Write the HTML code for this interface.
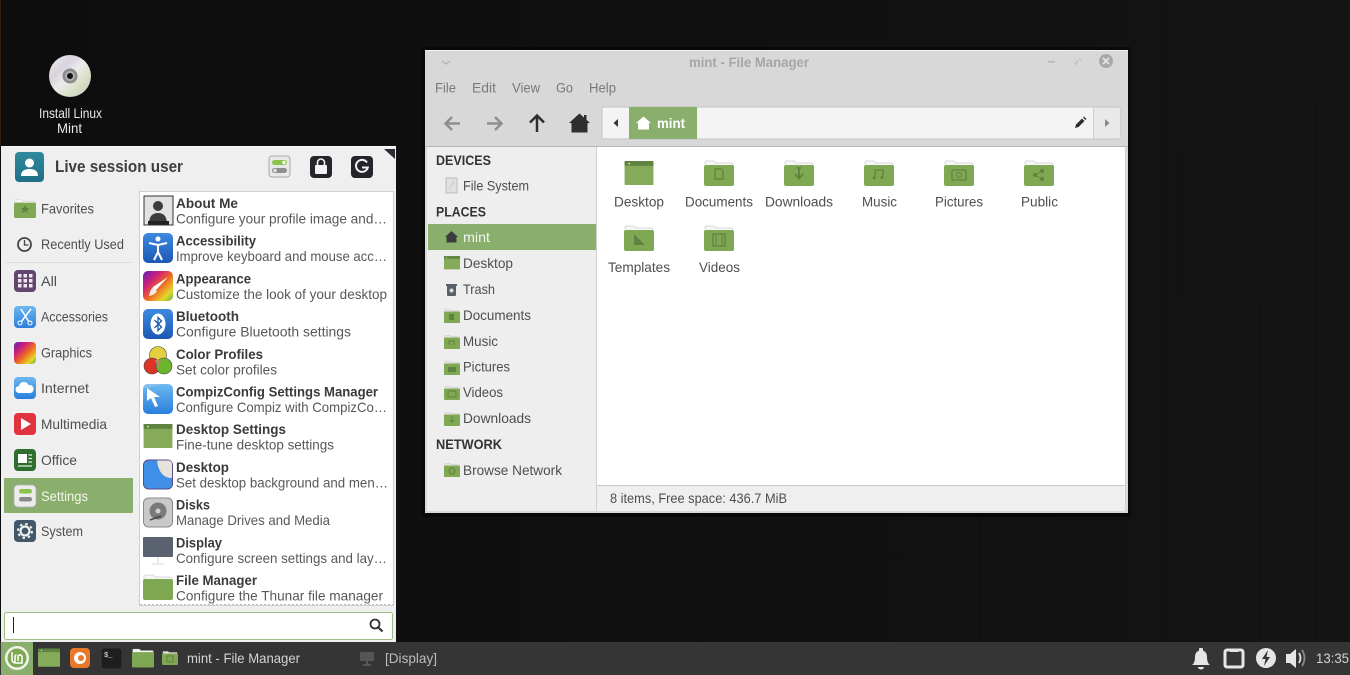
<!DOCTYPE html>
<html lang="en"><head><meta charset="utf-8"><title>Linux Mint desktop</title>
<style>
html,body{margin:0;padding:0;background:#111;width:1350px;height:675px;overflow:hidden}
svg{display:block}
text{font-family:"Liberation Sans",sans-serif;font-size:14px;fill:#484848}
.b{font-weight:700;fill:#3a3a3a}
.d{fill:#585858}
.h{font-weight:700;fill:#333}
.f{fill:#4e4e4e}
.m{fill:#7a7a7a}
.w{fill:#fff}
.p{fill:#d4d4d4}
</style></head><body>
<svg xmlns="http://www.w3.org/2000/svg" width="1350" height="675" viewBox="0 0 1350 675">
<defs>
<linearGradient id="bg" x1="0" y1="0" x2="1" y2="0"><stop offset="0" stop-color="#0d0d0d"/><stop offset=".5" stop-color="#101010"/><stop offset="1" stop-color="#141414"/></linearGradient>
<linearGradient id="rb" x1="0" y1="0" x2="1" y2="1"><stop offset="0" stop-color="#5b22b5"/><stop offset=".3" stop-color="#d0207a"/><stop offset=".55" stop-color="#ee6a22"/><stop offset=".8" stop-color="#e8d62a"/><stop offset="1" stop-color="#58b848"/></linearGradient>
<linearGradient id="blue" x1="0" y1="0" x2="0" y2="1"><stop offset="0" stop-color="#3d8ae0"/><stop offset="1" stop-color="#1c58b4"/></linearGradient>
<linearGradient id="sky" x1="0" y1="0" x2="0" y2="1"><stop offset="0" stop-color="#6cb8f0"/><stop offset="1" stop-color="#2a7fdc"/></linearGradient>
<linearGradient id="teal" x1="0" y1="0" x2="0" y2="1"><stop offset="0" stop-color="#2f8a9c"/><stop offset="1" stop-color="#1f6f86"/></linearGradient>
<linearGradient id="cd" x1="0" y1="0" x2="1" y2="1"><stop offset="0" stop-color="#f4f4f4"/><stop offset=".3" stop-color="#d8d2dc"/><stop offset=".5" stop-color="#ebebeb"/><stop offset=".72" stop-color="#d8e0c4"/><stop offset="1" stop-color="#c4c4c4"/></linearGradient>
<symbol id="fold" viewBox="0 0 30 26"><path d="M1 5V2.500Q1 1 2.500 1H10L12 3H27.500Q29 3 29 5V8H1Z" fill="#f6f6f6" stroke="#d0d0d0" stroke-width=".8"/><rect x="0" y="5" width="30" height="21" rx="2" fill="#7fa853"/></symbol>
<symbol id="win" viewBox="0 0 30 26"><rect x="0" y="0" width="30" height="25" rx="1" fill="#85ab5a"/><rect x="0" y="0" width="30" height="5" fill="#5f8340"/><rect x="4" y="2" width="1.500" height="1.500" fill="#e8f0dc"/></symbol>
<symbol id="sfold" viewBox="0 0 16 16"><path d="M1 4V1.500H6L7 2.500H15V5H1Z" fill="#e8e8e8" stroke="#c0c0c0" stroke-width=".5"/><rect x="0" y="3.500" width="16" height="11.500" rx="1" fill="#7fa853"/></symbol>
</defs>

<!-- desktop -->
<rect width="1350" height="675" fill="url(#bg)"/>
<rect x="0" y="0" width="1" height="145" fill="#3a1a14"/>
<g stroke="#0a0a0a" stroke-width="1" opacity=".3">
<path d="M1165 0V640M1296 0V200M832 513V640M980 513V640M1034 510V640M1316 100V640M700 513V642M560 513V642M1180 150V300M1260 300V640"/>
<path d="M800 555H930M800 608H885"/>
</g>
<circle cx="70" cy="76" r="21" fill="url(#cd)"/>
<circle cx="70" cy="76" r="7.500" fill="#8a8a8a"/><circle cx="70" cy="76" r="5" fill="#b0b0b0"/><circle cx="70" cy="76" r="3" fill="#111"/>
<text class="p" x="39" y="118" textLength="63" lengthAdjust="spacingAndGlyphs" style="fill:#e8e8e8">Install Linux</text>
<text class="p" x="57" y="133" textLength="25" lengthAdjust="spacingAndGlyphs" style="fill:#e8e8e8">Mint</text>

<!-- file manager window -->
<rect x="422" y="47" width="709" height="470" fill="#000" opacity=".45"/>
<rect x="425" y="50" width="703" height="463" fill="#d8d8d8"/>
<rect x="425" y="50" width="703" height="1" fill="#f2f2f2"/>
<path d="M442 61l4 3 4-3" fill="none" stroke="#b4b4b4" stroke-width="1.300"/>
<text x="689" y="67" textLength="120" lengthAdjust="spacingAndGlyphs" style="font-weight:700;fill:#a6a6a6">mint - File Manager</text>
<rect x="1048" y="61" width="7" height="1.500" fill="#b8b8b8"/>
<path d="M1075 64l3 -3M1079 59.500l2 0M1075 65l1 0" stroke="#bcbcbc" stroke-width="1.500" fill="none"/>
<circle cx="1106" cy="61" r="7" fill="#a9a9a9"/><path d="M1103 58l6 6M1109 58l-6 6" stroke="#e6e6e6" stroke-width="1.800"/>
<text class="m" x="435" y="92.500" textLength="21" lengthAdjust="spacingAndGlyphs">File</text>
<text class="m" x="472" y="92.500" textLength="24" lengthAdjust="spacingAndGlyphs">Edit</text>
<text class="m" x="512" y="92.500" textLength="28" lengthAdjust="spacingAndGlyphs">View</text>
<text class="m" x="556" y="92.500" textLength="17" lengthAdjust="spacingAndGlyphs">Go</text>
<text class="m" x="589" y="92.500" textLength="27" lengthAdjust="spacingAndGlyphs">Help</text>
<!-- toolbar icons -->
<path d="M460 123.500H446M452 117l-6.500 6.500 6.500 6.500" fill="none" stroke="#8e8e8e" stroke-width="2.500"/>
<path d="M487 123.500H501M495 117l6.500 6.500-6.500 6.500" fill="none" stroke="#8e8e8e" stroke-width="2.500"/>
<path d="M537 132V116M530 122.500l7-7 7 7" fill="none" stroke="#2e2e2e" stroke-width="2.500"/>
<path d="M569 123l10.500-9.500 10.500 9.500h-2.500v9.500h-16V123Z" fill="#2e2e2e"/><rect x="584" y="115" width="2.500" height="5" fill="#2e2e2e"/>
<!-- path bar -->
<rect x="602" y="107" width="518" height="32" rx="2" fill="#f4f4f4" stroke="#c4c4c4"/>
<rect x="1094" y="107.500" width="26" height="31" fill="#e9e9e9"/><rect x="1093" y="107" width="1" height="32" fill="#cfcfcf"/>
<path d="M618 119v8l-4.500-4Z" fill="#333"/>
<path d="M1105 119v8l4.500-4Z" fill="#8a8a8a"/>
<rect x="629" y="107" width="68" height="32" fill="#8aae6b"/>
<path d="M636 123l7.500-6.500 7.500 6.500h-2v6.500h-11V123Z" fill="#fff"/>
<text class="w" x="657" y="128" textLength="28" lengthAdjust="spacingAndGlyphs" style="font-weight:700">mint</text>
<path d="M1075 128l1-3.500 6-6 2.500 2.500-6 6ZM1083 117.500l1-1 2.500 2.500-1 1Z" fill="#2e2e2e"/>
<rect x="425" y="146" width="703" height="1" fill="#b8b8b8"/>
<!-- sidebar -->
<rect x="427" y="147" width="169" height="364" fill="#eeeeee"/>
<rect x="596" y="147" width="1" height="364" fill="#d0d0d0"/>
<text class="h" x="436" y="165" textLength="55" lengthAdjust="spacingAndGlyphs">DEVICES</text>
<rect x="446" y="178" width="11" height="15" fill="#e0e0e0" stroke="#bdbdbd"/><path d="M449 189l5-7" stroke="#c6c6c6"/>
<text class="f" x="463" y="190.500" textLength="66" lengthAdjust="spacingAndGlyphs">File System</text>
<text class="h" x="436" y="216.500" textLength="50" lengthAdjust="spacingAndGlyphs">PLACES</text>
<rect x="428" y="224" width="168" height="26" fill="#8aae6b"/>
<path d="M445 237l6.500-6 6.500 6h-1.500v5.500h-10V237Z" fill="#3d3d3d"/>
<text x="463" y="242" textLength="27" lengthAdjust="spacingAndGlyphs" style="fill:#f2f6ec">mint</text>
<use href="#win" x="444" y="256" width="16" height="14"/>
<text class="f" x="463" y="268" textLength="50" lengthAdjust="spacingAndGlyphs">Desktop</text>
<path d="M446 284h11v2h-1v9q0 1-1 1h-7q-1 0-1-1v-9h-1Z" fill="#5a6068"/><circle cx="451.500" cy="290.500" r="2" fill="#e0e0e0"/>
<text class="f" x="463" y="294" textLength="32" lengthAdjust="spacingAndGlyphs">Trash</text>
<use href="#sfold" x="444" y="308" width="16" height="16"/><rect x="449" y="314" width="5" height="6" fill="#5f8340"/>
<text class="f" x="463" y="320" textLength="68" lengthAdjust="spacingAndGlyphs">Documents</text>
<use href="#sfold" x="444" y="334" width="16" height="16"/><path d="M449 345v-4h5v4" fill="none" stroke="#5f8340"/>
<text class="f" x="463" y="346" textLength="35" lengthAdjust="spacingAndGlyphs">Music</text>
<use href="#sfold" x="444" y="360" width="16" height="16"/><rect x="448" y="367" width="8" height="5" fill="#5f8340"/>
<text class="f" x="463" y="371.500" textLength="47" lengthAdjust="spacingAndGlyphs">Pictures</text>
<use href="#sfold" x="444" y="385" width="16" height="16"/><rect x="448" y="391" width="8" height="6" fill="none" stroke="#5f8340"/>
<text class="f" x="463" y="397" textLength="40" lengthAdjust="spacingAndGlyphs">Videos</text>
<use href="#sfold" x="444" y="411" width="16" height="16"/><path d="M452 416v6M450 420l2 2 2-2" fill="none" stroke="#5f8340"/>
<text class="f" x="463" y="423" textLength="68" lengthAdjust="spacingAndGlyphs">Downloads</text>
<text class="h" x="436" y="449" textLength="66" lengthAdjust="spacingAndGlyphs">NETWORK</text>
<use href="#sfold" x="444" y="462" width="16" height="16"/><circle cx="452" cy="471" r="3" fill="none" stroke="#5f8340"/>
<text class="f" x="463" y="475" textLength="99" lengthAdjust="spacingAndGlyphs">Browse Network</text>
<!-- main view -->
<rect x="597" y="147" width="528" height="339" fill="#fff"/>
<rect x="597" y="485" width="528" height="1" fill="#c8c8c8"/>
<rect x="597" y="486" width="528" height="25" fill="#efefef"/>
<rect x="1125" y="147" width="1" height="364" fill="#cfcfcf"/>
<text class="f" x="610" y="503" textLength="177" lengthAdjust="spacingAndGlyphs">8 items, Free space: 436.7 MiB</text>

<use href="#win" x="624" y="161" width="30" height="25"/>
<use href="#fold" x="704" y="160" width="30" height="26"/><path d="M715 169h6l2 2v8h-8Z" fill="none" stroke="#5f8340" stroke-width="1.300"/>
<use href="#fold" x="784" y="160" width="30" height="26"/><path d="M799 168v10M795 174l4 4.500 4-4.500M797 168h4" fill="none" stroke="#5f8340" stroke-width="1.800"/>
<use href="#fold" x="864" y="160" width="30" height="26"/><path d="M875 178v-8h8v7" fill="none" stroke="#5f8340" stroke-width="1.300"/><circle cx="874" cy="178" r="1.500" fill="#5f8340"/><circle cx="882" cy="177.500" r="1.500" fill="#5f8340"/>
<use href="#fold" x="944" y="160" width="30" height="26"/><rect x="952" y="170" width="14" height="10" rx="1" fill="none" stroke="#5f8340" stroke-width="1.300"/><circle cx="959" cy="175" r="2.500" fill="none" stroke="#5f8340"/>
<use href="#fold" x="1024" y="160" width="30" height="26"/><path d="M1035 175l5-3M1035 175l5 3" stroke="#5f8340"/><circle cx="1035" cy="175" r="2" fill="#5f8340"/><circle cx="1042" cy="171" r="2" fill="#5f8340"/><circle cx="1042" cy="179" r="2" fill="#5f8340"/>
<text class="f" x="614" y="206.500" textLength="50" lengthAdjust="spacingAndGlyphs">Desktop</text>
<text class="f" x="685" y="206.500" textLength="68" lengthAdjust="spacingAndGlyphs">Documents</text>
<text class="f" x="765" y="206.500" textLength="68" lengthAdjust="spacingAndGlyphs">Downloads</text>
<text class="f" x="862" y="206.500" textLength="35" lengthAdjust="spacingAndGlyphs">Music</text>
<text class="f" x="935" y="206.500" textLength="48" lengthAdjust="spacingAndGlyphs">Pictures</text>
<text class="f" x="1021" y="206.500" textLength="37" lengthAdjust="spacingAndGlyphs">Public</text>
<use href="#fold" x="624" y="225" width="30" height="26"/><path d="M634 234v11h11Z" fill="#5f8340"/>
<use href="#fold" x="704" y="225" width="30" height="26"/><rect x="713" y="234" width="12" height="12" fill="none" stroke="#5f8340" stroke-width="1.300"/><path d="M716 234v12M722 234v12" stroke="#5f8340"/>
<text class="f" x="608" y="272" textLength="62" lengthAdjust="spacingAndGlyphs">Templates</text>
<text class="f" x="699" y="272" textLength="41" lengthAdjust="spacingAndGlyphs">Videos</text>

<!-- menu -->
<rect x="1" y="146" width="395" height="496" fill="#efefef"/>
<rect x="1" y="146" width="395" height="1" fill="#f8f8f8"/>
<path d="M384 149h11v10Z" fill="#2a2a35"/>
<rect x="15" y="152" width="29" height="30" rx="4" fill="url(#teal)"/>
<circle cx="29.500" cy="163" r="4.500" fill="#fff"/><path d="M21 176q0-7 8.500-7t8.500 7Z" fill="#fff"/>
<text x="55" y="172" textLength="128" lengthAdjust="spacingAndGlyphs" style="font-size:16.500px;font-weight:700;fill:#3d3d3d">Live session user</text>
<rect x="269" y="156" width="21" height="21" rx="3" fill="#e8e8e8" stroke="#a8a8a8"/>
<rect x="272" y="160" width="15" height="5" rx="2.500" fill="#8bc34a"/><rect x="272" y="168" width="15" height="5" rx="2.500" fill="#8e8e8e"/><circle cx="284" cy="162.500" r="1.800" fill="#fff"/><circle cx="275" cy="170.500" r="1.800" fill="#e0e0e0"/>
<rect x="310" y="156" width="22" height="22" rx="4" fill="#26232b"/><rect x="315" y="165" width="12" height="9" rx="1" fill="#f2f2f2"/><path d="M317.500 165v-2.500a3.500 3.500 0 0 1 7 0V165" fill="none" stroke="#f2f2f2" stroke-width="1.600"/>
<rect x="351" y="156" width="22" height="22" rx="4" fill="#26232b"/><path d="M367 162.500a6 6 0 1 0 .8 5H362" fill="none" stroke="#f2f2f2" stroke-width="2"/>

<!-- categories -->
<use href="#fold" x="14" y="199" width="22" height="19"/><path d="M25 205l1.500 3h3l-2.500 2 1 3-3-1.800-3 1.800 1-3-2.500-2h3Z" fill="#5f8340"/>
<text class="f" x="41" y="213.500" textLength="53" lengthAdjust="spacingAndGlyphs">Favorites</text>
<circle cx="24.500" cy="244.500" r="6.500" fill="none" stroke="#444" stroke-width="1.800"/><path d="M24.500 240v5h4" fill="none" stroke="#444" stroke-width="1.300"/>
<text class="f" x="41" y="249" textLength="83" lengthAdjust="spacingAndGlyphs">Recently Used</text>
<rect x="5" y="262" width="128" height="1" fill="#dedede"/>
<rect x="14" y="270" width="22" height="22" rx="4" fill="#63466f"/>
<g fill="#efe8f2"><rect x="18" y="274" width="3.500" height="3.500"/><rect x="23.500" y="274" width="3.500" height="3.500"/><rect x="29" y="274" width="3.500" height="3.500"/><rect x="18" y="279" width="3.500" height="3.500"/><rect x="23.500" y="279" width="3.500" height="3.500"/><rect x="29" y="279" width="3.500" height="3.500"/><rect x="18" y="284" width="3.500" height="3.500"/><rect x="23.500" y="284" width="3.500" height="3.500"/><rect x="29" y="284" width="3.500" height="3.500"/></g>
<text class="f" x="41" y="286" textLength="16" lengthAdjust="spacingAndGlyphs">All</text>
<rect x="14" y="306" width="22" height="22" rx="4" fill="url(#sky)"/><path d="M21 309l8 13M31 309l-10 13" stroke="#fff" stroke-width="1.500"/><circle cx="20" cy="323" r="2" fill="none" stroke="#fff"/><circle cx="30" cy="323" r="2" fill="none" stroke="#fff"/>
<text class="f" x="41" y="321.500" textLength="67" lengthAdjust="spacingAndGlyphs">Accessories</text>
<rect x="14" y="342" width="22" height="22" rx="4" fill="url(#rb)"/>
<text class="f" x="41" y="357.500" textLength="51" lengthAdjust="spacingAndGlyphs">Graphics</text>
<rect x="14" y="377" width="22" height="22" rx="4" fill="url(#sky)"/><path d="M19 393a3.500 3.500 0 0 1 0-7 5 5 0 0 1 9.500-1 4 4 0 0 1 2 8Z" fill="#fff"/>
<text class="f" x="41" y="393" textLength="48" lengthAdjust="spacingAndGlyphs">Internet</text>
<rect x="14" y="413" width="22" height="22" rx="4" fill="#e0333f"/><path d="M21 418v12l10-6Z" fill="#fff"/>
<text class="f" x="41" y="429" textLength="66" lengthAdjust="spacingAndGlyphs">Multimedia</text>
<rect x="14" y="449" width="22" height="22" rx="4" fill="#2f6e2e"/><rect x="18" y="454" width="9" height="9" fill="#fff"/><path d="M28.500 455h3.500M28.500 458.500h3.500M28.500 462h3.500M18 466h14" stroke="#dfeede" stroke-width="1.200"/>
<text class="f" x="41" y="465" textLength="36" lengthAdjust="spacingAndGlyphs">Office</text>
<rect x="4" y="478" width="129" height="35" rx="1" fill="#8aae6b"/>
<rect x="14" y="485" width="22" height="22" rx="4" fill="#ececec" stroke="#b4b4b4" stroke-width=".8"/><rect x="19" y="489" width="13" height="4.500" rx="2.200" fill="#8bc34a"/><rect x="19" y="497" width="13" height="4.500" rx="2.200" fill="#8a8a8a"/>
<text x="41" y="501" textLength="47" lengthAdjust="spacingAndGlyphs" style="fill:#f2f6ec">Settings</text>
<rect x="14" y="520" width="22" height="22" rx="4" fill="#42586a"/><circle cx="25" cy="531" r="4.500" fill="none" stroke="#f0f0f0" stroke-width="2.200"/><circle cx="25" cy="531" r="7" fill="none" stroke="#f0f0f0" stroke-width="2" stroke-dasharray="2.500 3"/>
<text class="f" x="41" y="536" textLength="42" lengthAdjust="spacingAndGlyphs">System</text>

<!-- app list -->
<rect x="139.500" y="191.500" width="254" height="414" fill="#fff" stroke="#cfcfcf"/>
<rect x="144" y="196" width="29" height="29" fill="#e2e2e2" stroke="#333"/><circle cx="158" cy="206" r="5" fill="#3c3c3c"/><path d="M149 224q0-11 9-11t9 11Z" fill="#3c3c3c"/><rect x="148" y="221" width="21" height="3.500" fill="#222"/>
<text class="b" x="176" y="208" textLength="62" lengthAdjust="spacingAndGlyphs">About Me</text>
<text class="d" x="176" y="223.500" textLength="211" lengthAdjust="spacingAndGlyphs">Configure your profile image and…</text>

<rect x="143" y="233" width="30" height="30" rx="5" fill="url(#blue)"/><circle cx="158" cy="239" r="2.500" fill="#fff"/><path d="M149 243l9 2 9-2M158 245v7M158 252l-4 8M158 252l4 8" fill="none" stroke="#fff" stroke-width="2"/>
<text class="b" x="176" y="245.700" textLength="80" lengthAdjust="spacingAndGlyphs">Accessibility</text>
<text class="d" x="176" y="261.200" textLength="211" lengthAdjust="spacingAndGlyphs">Improve keyboard and mouse acc…</text>

<rect x="143" y="271" width="30" height="30" rx="5" fill="url(#rb)"/><path d="M168 277l-12 13-3-3Z" fill="#fff"/><path d="M153 287q-3 3-4 9 6-1 8-5Z" fill="#f2ece0"/>
<text class="b" x="176" y="283.400" textLength="75" lengthAdjust="spacingAndGlyphs">Appearance</text>
<text class="d" x="176" y="298.900" textLength="211" lengthAdjust="spacingAndGlyphs">Customize the look of your desktop</text>

<rect x="143" y="309" width="30" height="30" rx="5" fill="url(#blue)"/><ellipse cx="158" cy="324" rx="7.500" ry="10.500" fill="#fff"/><path d="M154.500 320l7 7-3.500 3.500v-13l3.500 3.500-7 7" fill="none" stroke="#1c58b4" stroke-width="1.300"/>
<text class="b" x="176" y="321.100" textLength="63" lengthAdjust="spacingAndGlyphs">Bluetooth</text>
<text class="d" x="176" y="336.600" textLength="175" lengthAdjust="spacingAndGlyphs">Configure Bluetooth settings</text>

<circle cx="158" cy="355" r="8.500" fill="#e6cf3e" stroke="#444" stroke-width=".6"/><circle cx="152" cy="366" r="8" fill="#dd3328" stroke="#444" stroke-width=".6"/><circle cx="164" cy="366" r="8" fill="#6ab42e" stroke="#444" stroke-width=".6"/><path d="M155 360h6l-3 9Z" fill="#b08a60"/>
<text class="b" x="176" y="358.800" textLength="87" lengthAdjust="spacingAndGlyphs">Color Profiles</text>
<text class="d" x="176" y="374.300" textLength="101" lengthAdjust="spacingAndGlyphs">Set color profiles</text>

<rect x="143" y="384" width="30" height="30" rx="5" fill="url(#sky)"/><path d="M147 388v13l4-3 4 9 3-1-4-9h6Z" fill="#fff"/><path d="M143 389q0-5 5-5h15Z" fill="#9ac8ee" opacity=".6"/>
<text class="b" x="176" y="396.500" textLength="202" lengthAdjust="spacingAndGlyphs">CompizConfig Settings Manager</text>
<text class="d" x="176" y="412" textLength="211" lengthAdjust="spacingAndGlyphs">Configure Compiz with CompizCo…</text>

<use href="#win" x="143" y="424" width="30" height="25"/>
<text class="b" x="176" y="434.200" textLength="110" lengthAdjust="spacingAndGlyphs">Desktop Settings</text>
<text class="d" x="176" y="449.700" textLength="158" lengthAdjust="spacingAndGlyphs">Fine-tune desktop settings</text>

<rect x="143.500" y="460" width="29" height="29" rx="5" fill="#3f8fe8" stroke="#5a4a8a"/><path d="M157 460.500h11q4 0 4 4V478q-13 0-15-17.500Z" fill="#e8e2dc"/>
<text class="b" x="176" y="471.900" textLength="53" lengthAdjust="spacingAndGlyphs">Desktop</text>
<text class="d" x="176" y="487.400" textLength="212" lengthAdjust="spacingAndGlyphs">Set desktop background and men…</text>

<rect x="143.500" y="498" width="29" height="29" rx="5" fill="#c9c9c9" stroke="#8a8a8a"/><circle cx="158" cy="511" r="8.500" fill="#7a7a7a"/><circle cx="158" cy="511" r="2.500" fill="#d0d0d0"/><path d="M150 520l11-4" stroke="#4a4a4a" stroke-width="1.500"/>
<text class="b" x="176" y="509.600" textLength="34" lengthAdjust="spacingAndGlyphs">Disks</text>
<text class="d" x="176" y="525.100" textLength="154" lengthAdjust="spacingAndGlyphs">Manage Drives and Media</text>

<rect x="143" y="537" width="30" height="20" rx="1" fill="#5a6270"/><path d="M158 557v6M152 564h12" stroke="#d8d8d8"/>
<text class="b" x="176" y="547.300" textLength="46" lengthAdjust="spacingAndGlyphs">Display</text>
<text class="d" x="176" y="562.800" textLength="211" lengthAdjust="spacingAndGlyphs">Configure screen settings and lay…</text>

<use href="#fold" x="143" y="574" width="30" height="26"/>
<text class="b" x="176" y="585" textLength="81" lengthAdjust="spacingAndGlyphs">File Manager</text>
<text class="d" x="176" y="600.500" textLength="207" lengthAdjust="spacingAndGlyphs">Configure the Thunar file manager</text>
<path d="M140 604.500H393" stroke="#bcbcbc" stroke-dasharray="2 2"/>

<!-- search -->
<rect x="4.500" y="612.500" width="388" height="27" rx="2" fill="#fff" stroke="#9fbc84"/>
<rect x="13" y="617" width="1" height="16" fill="#222"/>
<circle cx="375" cy="624" r="4.500" fill="none" stroke="#333" stroke-width="1.800"/><path d="M378.500 627.500l4 4" stroke="#333" stroke-width="2.200"/>

<!-- panel -->
<rect x="0" y="642" width="1350" height="33" fill="#353535"/>
<rect x="1" y="642" width="32" height="33" fill="#8aae6b"/>
<circle cx="17" cy="658" r="12" fill="#f0f4ea"/><circle cx="17" cy="658" r="9.500" fill="#7fa853"/>
<path d="M12 652v7q0 4 4 4h6v-6q0-2-2-2t-2 2v4M15 662v-5q0-2 1.500-2" fill="none" stroke="#fff" stroke-width="1.500"/>
<use href="#win" x="38" y="648" width="22" height="20"/>
<rect x="70" y="648" width="20" height="20" rx="4" fill="#e8792a"/><circle cx="80" cy="658" r="6" fill="#fff"/><circle cx="81" cy="658" r="3" fill="#e8792a"/>
<rect x="101" y="648" width="21" height="21" rx="3" fill="#1e1e1e" stroke="#444" stroke-width=".6"/><text x="104" y="657" style="font-size:7px;fill:#eee;font-family:'Liberation Mono',monospace">$_</text>
<use href="#fold" x="132" y="648" width="22" height="20"/>
<use href="#sfold" x="162" y="650" width="16" height="16"/><rect x="167" y="656" width="6" height="6" fill="none" stroke="#5f8340"/>
<text class="p" x="187" y="663" textLength="113" lengthAdjust="spacingAndGlyphs">mint - File Manager</text>
<rect x="360" y="652" width="14" height="9" fill="#555"/><path d="M367 661v3M363 665h8" stroke="#777"/>
<text x="385" y="663" textLength="52" lengthAdjust="spacingAndGlyphs" style="fill:#bdbdbd">[Display]</text>
<path d="M1192 665q3-2 3-8 0-6 6-7 6 1 6 7 0 6 3 8Z" fill="#e6e6e6"/><rect x="1199" y="648" width="4" height="3" rx="1" fill="#e6e6e6"/><path d="M1198 667a3 2.500 0 0 0 6 0Z" fill="#e6e6e6"/>
<rect x="1225" y="650" width="18" height="17" rx="2" fill="none" stroke="#e6e6e6" stroke-width="3"/><rect x="1230" y="649" width="8" height="3" fill="#e6e6e6"/>
<circle cx="1266" cy="658" r="10" fill="#e6e6e6"/><path d="M1268 650l-6 9h3.500l-1.500 7 6-9h-3.500Z" fill="#353535"/>
<path d="M1286 654h4l6-5v19l-6-5h-4Z" fill="#e6e6e6"/><path d="M1299 653q3 5 0 10" fill="none" stroke="#e6e6e6" stroke-width="1.800"/><path d="M1302 650q5 8 0 16" fill="none" stroke="#8a8a8a" stroke-width="1.800"/>
<text x="1316" y="663" textLength="33" lengthAdjust="spacingAndGlyphs" style="fill:#d4d4d4">13:35</text>
</svg>
</body></html>
